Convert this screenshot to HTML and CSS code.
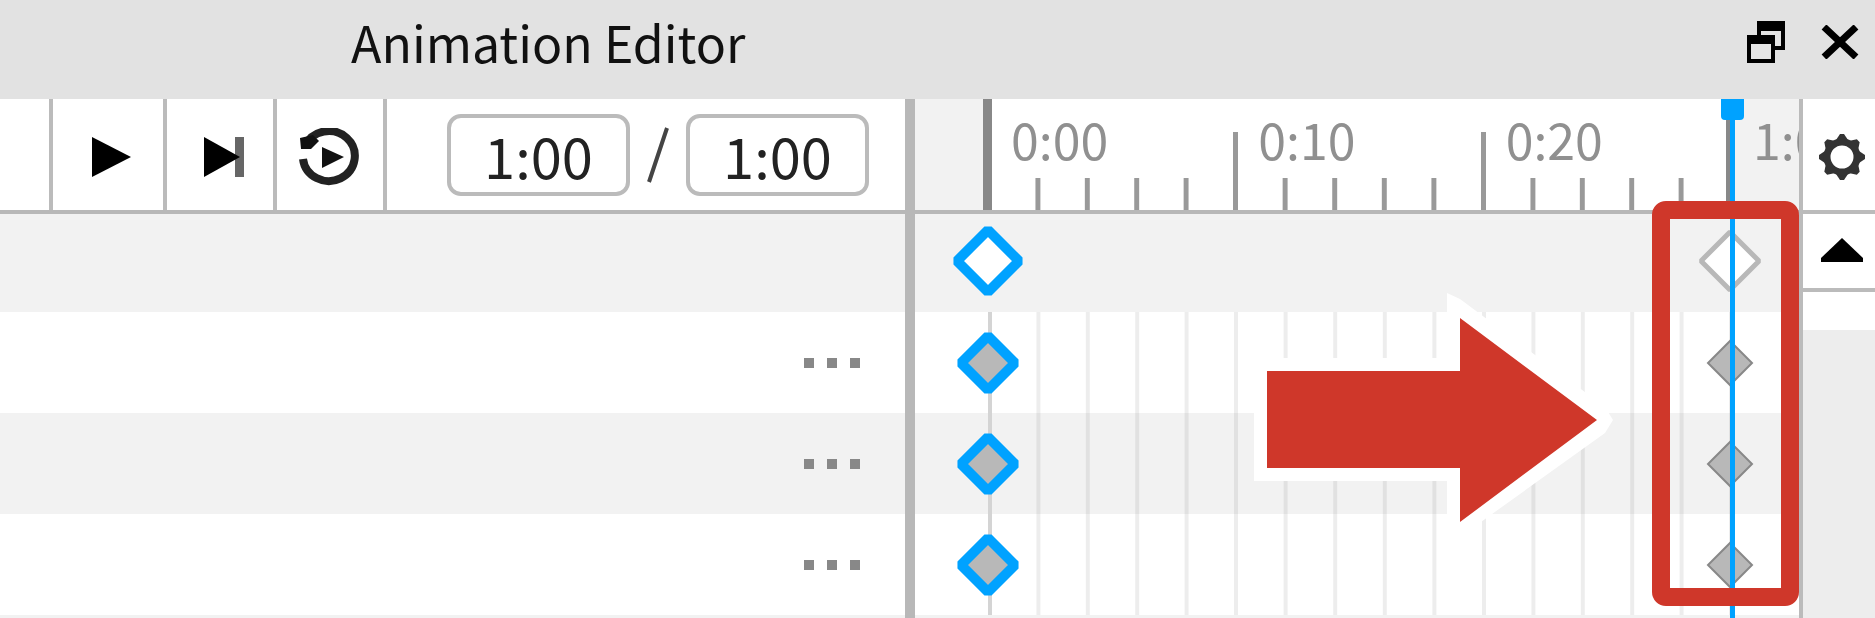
FILE: index.html
```html
<!DOCTYPE html>
<html lang="en">
<head>
<meta charset="utf-8">
<title>Animation Editor</title>
<link rel="stylesheet" href="styles.css">
</head>
<body>
<main class="editor">
  <header class="titlebar">
    <h1 class="title">Animation Editor</h1>
    <button class="window-btn" aria-label="Float window">
      <svg width="38" height="43" viewBox="0 0 38 43"><path d="M12 2h24v25h-9M12 2v12" fill="none" stroke="#000" stroke-width="4"/><path d="M10 0h28v10H10z"/><path d="M2 16h24v24H2z" fill="#e6e6e6" stroke="#000" stroke-width="4"/><path d="M0 14h28v9H0z"/></svg>
    </button>
    <button class="window-btn" aria-label="Close">
      <svg width="38" height="34" viewBox="0 0 38 34"><path d="M3 2L35 32M35 2L3 32" fill="none" stroke="#000" stroke-width="7"/></svg>
    </button>
  </header>

  <section class="workspace">
    <div class="tracks">
      <div class="toolbar">
        <span class="tool-rest"></span>
        <button class="tool tool-play" aria-label="Play"><svg width="42" height="42" viewBox="0 0 42 42"><path d="M2 1L41 21L2 41z"/></svg></button>
        <button class="tool tool-next" aria-label="Skip to end"><svg width="44" height="42" viewBox="0 0 44 42"><path d="M33 1h9v40h-9z" fill="#666"/><path d="M2 1L38 21L2 41z"/></svg></button>
        <button class="tool" aria-label="Loop"><svg width="64" height="58" viewBox="0 0 64 58"><path d="M7 18A26 25 0 1 1 5 31" fill="none" stroke="#222" stroke-width="8"/><path d="M2 10l13-3l6 6l-8 8H3z" fill="#111"/><path d="M24 19L46 29L24 40z" fill="#111"/></svg></button>
        <div class="times">
          <input class="time" value="1:00" aria-label="Current time">
          <span class="slash"><svg width="24" height="56" viewBox="0 0 24 56"><path d="M21 1L3 55" stroke="#444" stroke-width="4"/></svg></span>
          <input class="time" value="1:00" aria-label="Total time">
        </div>
      </div>
      <div class="row row-summary"></div>
      <div class="row"><button class="more" aria-label="Track options"><i></i><i></i><i></i></button></div>
      <div class="row row-alt"><button class="more" aria-label="Track options"><i></i><i></i><i></i></button></div>
      <div class="row"><button class="more" aria-label="Track options"><i></i><i></i><i></i></button></div>
      <div class="row row-alt"></div>
    </div>

    <div class="splitter"></div>

    <div class="timeline">
      <div class="ruler">
        <span class="ruler-start"></span>
        <span class="major">0:00</span>
        <span class="major">0:10</span>
        <span class="major">0:20</span>
        <span class="ruler-end">1:00</span>
      </div>
      <div class="row lane row-summary">
        <button class="key key-start" aria-label="Keyframe group at 0:00"><svg width="76" height="76" viewBox="0 0 76 76"><path d="M38 7L69 38L38 69L7 38z" fill="#fff" stroke="#00a2ff" stroke-width="10" stroke-linejoin="bevel"/></svg></button>
        <button class="key key-end" aria-label="Keyframe group at 1:00"><svg width="66" height="66" viewBox="0 0 66 66"><path d="M33 4L62 33L33 62L4 33z" fill="#fff" stroke="#b8b8b8" stroke-width="5" stroke-linejoin="bevel"/></svg></button>
      </div>
      <div class="row lane">
        <span class="grid"></span><span class="grid"></span><span class="grid"></span>
        <button class="key key-start" aria-label="Keyframe at 0:00"><svg width="68" height="68" viewBox="0 0 68 68"><path d="M34 7L61 34L34 61L7 34z" fill="#b8b8b8" stroke="#00a2ff" stroke-width="10" stroke-linejoin="bevel"/></svg></button>
        <button class="key key-end" aria-label="Keyframe at 1:00"><svg width="48" height="48" viewBox="0 0 48 48"><path d="M24 2L46 24L24 46L2 24z" fill="#b8b8b8" stroke="#888" stroke-width="2"/></svg></button>
      </div>
      <div class="row lane row-alt">
        <span class="grid"></span><span class="grid"></span><span class="grid"></span>
        <button class="key key-start" aria-label="Keyframe at 0:00"><svg width="68" height="68" viewBox="0 0 68 68"><path d="M34 7L61 34L34 61L7 34z" fill="#b8b8b8" stroke="#00a2ff" stroke-width="10" stroke-linejoin="bevel"/></svg></button>
        <button class="key key-end" aria-label="Keyframe at 1:00"><svg width="48" height="48" viewBox="0 0 48 48"><path d="M24 2L46 24L24 46L2 24z" fill="#b8b8b8" stroke="#888" stroke-width="2"/></svg></button>
      </div>
      <div class="row lane">
        <span class="grid"></span><span class="grid"></span><span class="grid"></span>
        <button class="key key-start" aria-label="Keyframe at 0:00"><svg width="68" height="68" viewBox="0 0 68 68"><path d="M34 7L61 34L34 61L7 34z" fill="#b8b8b8" stroke="#00a2ff" stroke-width="10" stroke-linejoin="bevel"/></svg></button>
        <button class="key key-end" aria-label="Keyframe at 1:00"><svg width="48" height="48" viewBox="0 0 48 48"><path d="M24 2L46 24L24 46L2 24z" fill="#b8b8b8" stroke="#888" stroke-width="2"/></svg></button>
      </div>
      <div class="row lane row-alt"></div>
      <div class="playhead"></div>
      <svg class="arrow" width="372" height="260" viewBox="0 0 372 260"><path d="M7 67H200V2L213 8L358 116L366 129L358 142L213 246L200 252V190H7z" fill="#fff"/><path d="M20 80H213V27L350 129L213 231V177H20z" fill="#cf372a"/></svg>
      <div class="callout"></div>
    </div>

    <aside class="side">
      <button class="settings" aria-label="Settings"><svg width="50" height="50" viewBox="-25 -25 50 50"><g fill="#333"><path id="t" d="M-6-17L-2-23H2L6-17z"/><use href="#t" transform="rotate(45)"/><use href="#t" transform="rotate(90)"/><use href="#t" transform="rotate(135)"/><use href="#t" transform="rotate(180)"/><use href="#t" transform="rotate(225)"/><use href="#t" transform="rotate(270)"/><use href="#t" transform="rotate(315)"/></g><circle r="15" fill="none" stroke="#333" stroke-width="7"/></svg></button>
      <button class="scroll-up" aria-label="Scroll up"><svg width="42" height="24" viewBox="0 0 42 24"><path d="M0 24V20L21 0L42 20V24z"/></svg></button>
      <div class="scroll-thumb"></div>
    </aside>
  </section>
</main>
</body>
</html>
```

FILE: styles.css
```css
* { box-sizing: border-box; }

body {
  margin: 0;
  background: #fff;
  font-family: "Noto Sans CJK JP", "Noto Sans", sans-serif;
}

button {
  padding: 0;
  border: 0;
  background: none;
}

svg { display: block; }

.editor {
  display: flex;
  flex-direction: column;
  height: 100vh;
  overflow: hidden;
}

.titlebar {
  flex: none;
  display: flex;
  align-items: flex-start;
  gap: 36px;
  height: 99px;
  padding: 20px 16px 0 351px;
  background: #e2e2e2;
}

.title {
  flex: 1;
  margin: 0;
  font-size: 50px;
  font-weight: 400;
  line-height: 42px;
  color: #111;
}

.window-btn {
  display: flex;
  align-items: center;
  height: 44px;
}

.workspace {
  flex: 1;
  display: grid;
  grid-template-columns: minmax(0, 905fr) 10px minmax(0, 884fr) 76px;
  min-height: 0;
}

.toolbar,
.ruler {
  height: 115px;
  border-bottom: 4px solid #b8b8b8;
}

.toolbar { display: flex; }

.tool-rest {
  flex: 1;
  border-right: 4px solid #bbb;
}

.tool {
  display: flex;
  align-items: center;
  justify-content: center;
  width: 110px;
  padding-top: 4px;
  border-right: 4px solid #bbb;
}

.tool-play {
  width: 114px;
  padding-left: 6px;
}

.tool-next { padding-left: 8px; }

.times {
  display: flex;
  align-items: center;
  justify-content: space-between;
  width: 518px;
  padding: 0 36px 0 60px;
}

.time {
  width: 183px;
  height: 82px;
  padding: 0;
  border: 4px solid #bbb;
  border-radius: 14px;
  background: #fff;
  font: 400 56px/74px "Noto Sans CJK JP", "Noto Sans", sans-serif;
  text-align: center;
  color: #222;
}

.row {
  display: flex;
  align-items: center;
  justify-content: flex-end;
  height: 101px;
  background: #fff;
}

.row-summary { height: 98px; }

.row-summary,
.row-alt { background: #f2f2f2; }

.more {
  display: flex;
  gap: 13px;
  margin-right: 45px;
}

.more i {
  width: 10px;
  height: 10px;
  background: #888;
}

.splitter { background: #b8b8b8; }

.timeline {
  position: relative;
  overflow: hidden;
}

.ruler,
.lane {
  display: grid;
  grid-template-columns: 73px 1fr 1fr 1fr 69px;
}

.ruler-start {
  border-right: 5px solid #888;
  background: #f2f2f2;
}

.major,
.ruler-end {
  padding-left: 23px;
  font-size: 50px;
  line-height: 78px;
  color: #909090;
}

.major {
  background:
    linear-gradient(to left, #999 5px, transparent 5px) 3px 100% / 20% 32px repeat-x,
    linear-gradient(to left, #999 5px, transparent 5px) 3px 100% / 100% 78px repeat-x;
}

.major:nth-child(2) { box-shadow: inset 4px 0 #888; }

.ruler-end {
  overflow: hidden;
  background: #f2f2f2;
  box-shadow: -4px 0 #888;
}

.lane {
  position: relative;
  align-items: stretch;
  justify-content: stretch;
}

.grid { background: linear-gradient(to left, rgba(0, 0, 0, 0.07) 4px, transparent 4px) 3px 0 / 20% 100% repeat-x; }

.grid:first-child {
  grid-column: 2;
  box-shadow: inset 4px 0 #d4d4d4;
}

/* Keyframes sit on the time axis */
.key {
  position: absolute;
  top: 50%;
  transform: translate(-50%, -50%);
}

.row-summary .key { top: 47px; }

.key-start { left: 73px; }
.key-end { left: calc(100% - 69px); }

.playhead {
  position: absolute;
  top: 0;
  bottom: 0;
  right: 64px;
  width: 5px;
  background: #00a2ff;
}

.playhead::before {
  content: "";
  position: absolute;
  top: 0;
  left: -9px;
  width: 23px;
  height: 21px;
  border-radius: 0 0 4px 4px;
  background: #00a2ff;
}

.arrow {
  position: absolute;
  top: 192px;
  right: 180px;
}

.callout {
  position: absolute;
  top: 102px;
  right: 0;
  width: 147px;
  height: 405px;
  border: 18px solid #cf372a;
  border-radius: 14px;
}

.side {
  display: flex;
  flex-direction: column;
  border-left: 4px solid #bbb;
  background: #ededed;
}

.settings,
.scroll-up {
  display: flex;
  align-items: center;
  justify-content: center;
  padding-left: 6px;
  border-bottom: 4px solid #bbb;
  background: #fff;
}

.settings {
  height: 115px;
  padding-top: 5px;
}

.scroll-up {
  height: 78px;
  padding-bottom: 2px;
}

.scroll-thumb {
  height: 38px;
  background: #fff;
}
```
